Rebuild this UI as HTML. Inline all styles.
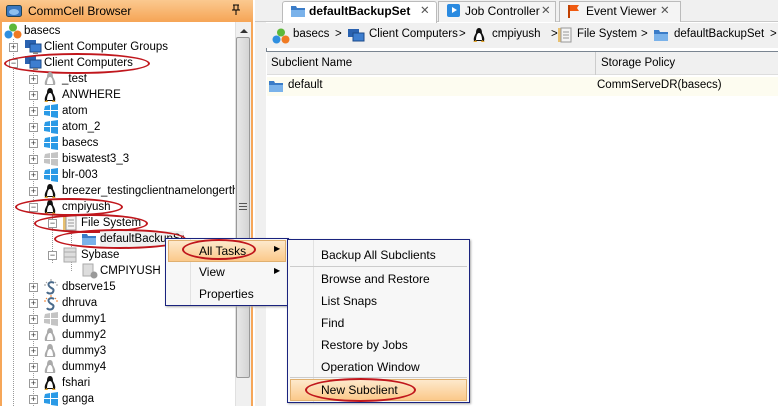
<!DOCTYPE html>
<html><head><meta charset="utf-8">
<style>
*{margin:0;padding:0;box-sizing:border-box}
body{width:778px;height:406px;overflow:hidden;background:#fff;font-family:"Liberation Sans",Tahoma,sans-serif;font-size:11.5px;color:#000;position:relative}
.a{position:absolute;white-space:nowrap}
.t{position:absolute;white-space:nowrap;line-height:16px;height:16px}
.ex{position:absolute;width:9px;height:9px;border:1px solid #999;background:#fff;font-size:9px;line-height:7px;text-align:center;color:#333}
.ov{position:absolute;border:2px solid #c0161c;border-radius:50%}
</style></head><body>
<!-- left panel -->
<div class="a" style="left:0;top:0;width:253px;height:406px;background:#f6a658"></div>
<div class="a" style="left:0;top:0;width:253px;height:21px;background:linear-gradient(#fbc98f,#f6a658)"></div>
<svg class="a" style="left:6px;top:4px" width="16" height="14"><rect x="0.5" y="1.5" width="15" height="11" rx="2" fill="#3a78c0" stroke="#245"/><ellipse cx="8" cy="8" rx="5" ry="3" fill="#8ec0ee"/></svg>
<div class="a" style="left:28px;top:4px;font-size:12px">CommCell Browser</div>
<svg class="a" style="left:231px;top:4px" width="10" height="12"><path d="M2 1h6M3 1v5h4V1M1 6h8M5 6v5" stroke="#000" fill="none"/></svg>
<div class="a" style="left:2px;top:22px;width:249px;height:384px;background:#fff"></div>
<div class="a" style="left:235px;top:22px;width:16px;height:384px;background:#f0f0f0;border-left:1px solid #e0e0e0"></div>
<div class="a" style="left:240px;top:29px;width:0;height:0;border-left:4px solid transparent;border-right:4px solid transparent;border-bottom:4px solid #333"></div>
<div class="a" style="left:236px;top:37px;width:14px;height:341px;background:linear-gradient(90deg,#e8e8e8,#d4d4d4);border:1px solid #999;border-radius:2px"></div>
<div class="a" style="left:239px;top:203px;width:8px;height:7px;border-top:1px solid #555;border-bottom:1px solid #555"></div>
<div class="a" style="left:239px;top:206px;width:8px;height:1px;background:#555"></div>
<div class="a" style="left:13px;top:39px;height:367px;border-left:1px dotted #999"></div>
<div class="a" style="left:33px;top:71px;height:335px;border-left:1px dotted #999"></div>
<div class="a" style="left:52px;top:215px;height:48px;border-left:1px dotted #999"></div>
<div class="a" style="left:71px;top:231px;height:40px;border-left:1px dotted #999"></div>

<svg class="a" style="left:4px;top:23px" width="18" height="16"><circle cx="9" cy="4.5" r="4" fill="#5db83a"/><circle cx="4.5" cy="11.5" r="4" fill="#2f8fe0"/><circle cx="13.5" cy="11.5" r="4" fill="#f07a22"/></svg>
<div class="t" style="left:24px;top:23px">basecs</div>
<div class="ex" style="left:9px;top:43px">+</div>
<svg class="a" style="left:24px;top:39px" width="18" height="15"><rect x="1" y="1" width="11" height="8" fill="#2a62b0"/><rect x="6" y="5" width="11" height="8" fill="#3d7ed0" stroke="#1b4a8a"/><rect x="9" y="13" width="5" height="2" fill="#888"/></svg>
<div class="t" style="left:44px;top:39px">Client Computer Groups</div>
<div class="ex" style="left:9px;top:59px">&#8722;</div>
<svg class="a" style="left:24px;top:55px" width="18" height="15"><rect x="1" y="1" width="11" height="8" fill="#2a62b0"/><rect x="6" y="5" width="11" height="8" fill="#3d7ed0" stroke="#1b4a8a"/><rect x="9" y="13" width="5" height="2" fill="#888"/></svg>
<div class="t" style="left:44px;top:55px">Client Computers</div>
<div class="ov" style="left:4px;top:53px;width:146px;height:21px"></div>

<svg width="0" height="0" style="position:absolute"><defs>
<symbol id="lx" viewBox="0 0 14 16"><path d="M7 1C4.5 1 4 4 4 6 3 8 1 11 2 14h10c1-3-1-6-2-8 0-2-.5-5-3-5z" fill="#111"/><path d="M7 6c-2 0-3 4-3 7h6c0-3-1-7-3-7z" fill="#fff"/><path d="M1 15l3-2 1 2zM13 15l-3-2-1 2z" fill="#e0a020"/></symbol>
<symbol id="lxg" viewBox="0 0 14 16"><path d="M7 1C4.5 1 4 4 4 6 3 8 1 11 2 14h10c1-3-1-6-2-8 0-2-.5-5-3-5z" fill="#aaa"/><path d="M7 6c-2 0-3 4-3 7h6c0-3-1-7-3-7z" fill="#fff"/></symbol>
<symbol id="wn" viewBox="0 0 16 14"><path d="M2 2l5-1v5H1zM8 1l7-1v6H8zM1 7h6v5l-6-1zM8 7h7v7l-7-1z" fill="#2a9ae6"/></symbol>
<symbol id="wng" viewBox="0 0 16 14"><path d="M2 2l5-1v5H1zM8 1l7-1v6H8zM1 7h6v5l-6-1zM8 7h7v7l-7-1z" fill="#c4c4c4"/></symbol>
<symbol id="sy" viewBox="0 0 16 16"><path d="M11 4c-3-2-7 0-5 3s6 2 4 6c-1 2-5 2-6 0" stroke="#4a6a8a" stroke-width="2" fill="none"/><path d="M3 3l1 1M8 0v2M13 3l-1 1M1 6h2M15 6h-2" stroke="#999"/></symbol>
<symbol id="syo" viewBox="0 0 16 16"><path d="M11 4c-3-2-7 0-5 3s6 2 4 6c-1 2-5 2-6 0" stroke="#4a6a8a" stroke-width="2" fill="none"/><path d="M3 3l1 1M8 0v2M13 3l-1 1M1 6h2M15 6h-2" stroke="#f07a22"/></symbol>
<symbol id="fd" viewBox="0 0 16 14"><path d="M1 2h5l1 2h8v9H1z" fill="#3a7cc8"/><path d="M1 6h14v7H1z" fill="#7ab2ea"/></symbol>
</defs></svg>

<div class="ex" style="left:29px;top:75px">+</div><svg class="a" style="left:43px;top:71px" width="14" height="16"><use href="#lxg"/></svg><div class="t" style="left:62px;top:71px">_test</div>
<div class="ex" style="left:29px;top:91px">+</div><svg class="a" style="left:43px;top:87px" width="14" height="16"><use href="#lx"/></svg><div class="t" style="left:62px;top:87px">ANWHERE</div>
<div class="ex" style="left:29px;top:107px">+</div><svg class="a" style="left:43px;top:104px" width="16" height="14"><use href="#wn"/></svg><div class="t" style="left:62px;top:103px">atom</div>
<div class="ex" style="left:29px;top:123px">+</div><svg class="a" style="left:43px;top:120px" width="16" height="14"><use href="#wn"/></svg><div class="t" style="left:62px;top:119px">atom_2</div>
<div class="ex" style="left:29px;top:139px">+</div><svg class="a" style="left:43px;top:136px" width="16" height="14"><use href="#wn"/></svg><div class="t" style="left:62px;top:135px">basecs</div>
<div class="ex" style="left:29px;top:155px">+</div><svg class="a" style="left:43px;top:152px" width="16" height="14"><use href="#wng"/></svg><div class="t" style="left:62px;top:151px">biswatest3_3</div>
<div class="ex" style="left:29px;top:171px">+</div><svg class="a" style="left:43px;top:168px" width="16" height="14"><use href="#wn"/></svg><div class="t" style="left:62px;top:167px">blr-003</div>
<div class="ex" style="left:29px;top:187px">+</div><svg class="a" style="left:43px;top:183px" width="14" height="16"><use href="#lx"/></svg><div class="t" style="left:62px;top:183px;width:173px;overflow:hidden">breezer_testingclientnamelongerthan</div>
<div class="ex" style="left:29px;top:203px">&#8722;</div><svg class="a" style="left:43px;top:199px" width="14" height="16"><use href="#lx"/></svg><div class="t" style="left:62px;top:199px">cmpiyush</div>
<div class="ov" style="left:15px;top:198px;width:108px;height:18px"></div>
<div class="ex" style="left:48px;top:219px">&#8722;</div>
<svg class="a" style="left:62px;top:215px" width="16" height="16"><rect x="1" y="1" width="4" height="14" fill="#e8c070"/><rect x="4" y="1" width="10" height="14" fill="#f4f4f4" stroke="#999"/><path d="M6 5h6M6 8h6M6 11h6" stroke="#999"/></svg>
<div class="t" style="left:81px;top:215px">File System</div>
<div class="ov" style="left:34px;top:214px;width:114px;height:19px"></div>
<svg class="a" style="left:81px;top:232px" width="16" height="14"><use href="#fd"/></svg>
<div class="t" style="left:100px;top:231px;width:84px;overflow:hidden;background:#f0f0f0">defaultBackupSet</div>
<div class="ov" style="left:54px;top:229px;width:132px;height:20px"></div>
<div class="ex" style="left:48px;top:251px">&#8722;</div>
<svg class="a" style="left:63px;top:247px" width="14" height="16"><rect x="1" y="1" width="12" height="14" fill="#ddd" stroke="#aaa"/><path d="M1 5h12M1 10h12" stroke="#aaa"/></svg>
<div class="t" style="left:81px;top:247px">Sybase</div>
<svg class="a" style="left:82px;top:263px" width="16" height="16"><rect x="1" y="1" width="10" height="12" fill="#ddd" stroke="#aaa"/><circle cx="12" cy="12" r="3.5" fill="#999"/></svg>
<div class="t" style="left:100px;top:263px">CMPIYUSH</div>
<div class="ex" style="left:29px;top:283px">+</div><svg class="a" style="left:43px;top:279px" width="16" height="16"><use href="#sy"/></svg><div class="t" style="left:62px;top:279px">dbserve15</div>
<div class="ex" style="left:29px;top:299px">+</div><svg class="a" style="left:43px;top:295px" width="16" height="16"><use href="#syo"/></svg><div class="t" style="left:62px;top:295px">dhruva</div>
<div class="ex" style="left:29px;top:315px">+</div><svg class="a" style="left:43px;top:312px" width="16" height="14"><use href="#wng"/></svg><div class="t" style="left:62px;top:311px">dummy1</div>
<div class="ex" style="left:29px;top:331px">+</div><svg class="a" style="left:43px;top:327px" width="14" height="16"><use href="#lxg"/></svg><div class="t" style="left:62px;top:327px">dummy2</div>
<div class="ex" style="left:29px;top:347px">+</div><svg class="a" style="left:43px;top:343px" width="14" height="16"><use href="#lxg"/></svg><div class="t" style="left:62px;top:343px">dummy3</div>
<div class="ex" style="left:29px;top:363px">+</div><svg class="a" style="left:43px;top:359px" width="14" height="16"><use href="#lxg"/></svg><div class="t" style="left:62px;top:359px">dummy4</div>
<div class="ex" style="left:29px;top:379px">+</div><svg class="a" style="left:43px;top:375px" width="14" height="16"><use href="#lx"/></svg><div class="t" style="left:62px;top:375px">fshari</div>
<div class="ex" style="left:29px;top:395px">+</div><svg class="a" style="left:43px;top:392px" width="16" height="14"><use href="#wn"/></svg><div class="t" style="left:62px;top:391px">ganga</div>

<!-- splitter -->
<div class="a" style="left:255px;top:0;width:11px;height:406px;background:#f0f0f0"></div>
<div class="a" style="left:266px;top:48px;width:1px;height:358px;background:#7a8591"></div>
<!-- right tabs -->
<div class="a" style="left:255px;top:0;width:523px;height:22px;background:#f0f0f0;border-bottom:1px solid #c8c8c8"></div>
<div class="a" style="left:282px;top:1px;width:155px;height:22px;background:#fff;border:1px solid #bbb;border-bottom:none;border-radius:3px 3px 0 0"></div>
<svg class="a" style="left:290px;top:4px" width="16" height="14"><use href="#fd"/></svg>
<div class="a" style="left:309px;top:4px;font-weight:bold;font-size:12px">defaultBackupSet</div>
<div class="a" style="left:420px;top:3px;color:#555">&#x2715;</div>
<div class="a" style="left:438px;top:1px;width:118px;height:21px;border:1px solid #bbb;border-bottom:none;background:#f4f4f4"></div>
<div class="a" style="left:447px;top:4px;width:13px;height:13px;background:#2a8ae0;border-radius:2px"></div>
<div class="a" style="left:452px;top:7px;width:0;height:0;border-top:3.5px solid transparent;border-bottom:3.5px solid transparent;border-left:5px solid #fff"></div>
<div class="a" style="left:465px;top:4px;font-size:12px">Job Controller</div>
<div class="a" style="left:541px;top:3px;color:#555">&#x2715;</div>
<div class="a" style="left:559px;top:1px;width:122px;height:21px;border:1px solid #bbb;border-bottom:none;background:#f4f4f4"></div>
<svg class="a" style="left:568px;top:4px" width="12" height="14"><path d="M1 1v13" stroke="#c04000" stroke-width="2"/><path d="M2 1h9l-2 3 2 3H2z" fill="#f05a10"/></svg>
<div class="a" style="left:586px;top:4px;font-size:12px">Event Viewer</div>
<div class="a" style="left:660px;top:3px;color:#555">&#x2715;</div>

<!-- breadcrumb -->
<div class="a" style="left:262px;top:23px;width:516px;height:25px;background:#f0f0f0;overflow:hidden">
<svg class="a" style="left:10px;top:5px" width="18" height="16"><circle cx="9" cy="4.5" r="4" fill="#5db83a"/><circle cx="4.5" cy="11.5" r="4" fill="#2f8fe0"/><circle cx="13.5" cy="11.5" r="4" fill="#f07a22"/></svg>
<div class="a" style="left:31px;top:5px">basecs</div><div class="a" style="left:73px;top:5px">&gt;</div>
<svg class="a" style="left:85px;top:5px" width="18" height="15"><rect x="1" y="1" width="11" height="8" fill="#2a62b0"/><rect x="6" y="5" width="11" height="8" fill="#3d7ed0" stroke="#1b4a8a"/></svg>
<div class="a" style="left:107px;top:5px">Client Computers</div><div class="a" style="left:197px;top:5px">&gt;</div>
<svg class="a" style="left:210px;top:4px" width="14" height="16"><use href="#lx"/></svg>
<div class="a" style="left:230px;top:5px">cmpiyush</div><div class="a" style="left:289px;top:5px">&gt;</div>
<svg class="a" style="left:295px;top:4px" width="16" height="16"><rect x="1" y="1" width="4" height="14" fill="#e8c070"/><rect x="4" y="1" width="10" height="14" fill="#f4f4f4" stroke="#999"/><path d="M6 5h6M6 8h6M6 11h6" stroke="#999"/></svg>
<div class="a" style="left:315px;top:5px">File System</div><div class="a" style="left:379px;top:5px">&gt;</div>
<svg class="a" style="left:391px;top:5px" width="16" height="14"><use href="#fd"/></svg>
<div class="a" style="left:412px;top:5px">defaultBackupSet</div><div class="a" style="left:508px;top:5px">&gt;</div>
</div>

<div class="a" style="left:266px;top:51px;width:512px;height:355px;border-top:1px solid #7a8591;background:#fff"></div>
<div class="a" style="left:267px;top:52px;width:511px;height:23px;background:#f0f0f0;border-bottom:1px solid #ddd"></div>
<div class="a" style="left:595px;top:52px;width:1px;height:23px;background:#ccc"></div>
<div class="a" style="left:271px;top:57px">Subclient Name</div>
<div class="a" style="left:601px;top:57px">Storage Policy</div>
<div class="a" style="left:267px;top:77px;width:511px;height:19px;background:#fdfcf0"></div>
<svg class="a" style="left:268px;top:79px" width="16" height="14"><use href="#fd"/></svg>
<div class="a" style="left:288px;top:79px">default</div>
<div class="a" style="left:597px;top:79px">CommServeDR(basecs)</div>

<!-- context menu 1 -->
<div class="a" style="left:165px;top:238px;width:124px;height:68px;background:#f7f7f7;border:1px solid #1a237e;box-shadow:1px 1px 2px #aaa">
 <div class="a" style="left:24px;top:0;width:1px;height:66px;background:#e2e2e2"></div>
 <div class="a" style="left:2px;top:1px;width:118px;height:22px;background:linear-gradient(#fde9cc,#fbc98a);border:1px solid #e0b070"></div>
 <div class="a" style="left:33px;top:5px;font-size:12px">All Tasks</div><div class="a" style="left:108px;top:5px;font-size:8px">&#9654;</div>
 <div class="a" style="left:33px;top:26px;font-size:12px">View</div><div class="a" style="left:108px;top:27px;font-size:8px">&#9654;</div>
 <div class="a" style="left:33px;top:48px;font-size:12px">Properties</div>
</div>
<div class="ov" style="left:182px;top:239px;width:74px;height:21px"></div>
<!-- submenu -->
<div class="a" style="left:287px;top:239px;width:183px;height:164px;background:#f7f7f7;border:1px solid #1a237e;box-shadow:1px 1px 2px #aaa;font-size:12px">
 <div class="a" style="left:25px;top:0;width:1px;height:162px;background:#e2e2e2"></div>
 <div class="a" style="left:33px;top:8px">Backup All Subclients</div>
 <div class="a" style="left:2px;top:26px;width:177px;height:1px;background:#ccc"></div>
 <div class="a" style="left:33px;top:32px">Browse and Restore</div>
 <div class="a" style="left:33px;top:54px">List Snaps</div>
 <div class="a" style="left:33px;top:76px">Find</div>
 <div class="a" style="left:33px;top:98px">Restore by Jobs</div>
 <div class="a" style="left:33px;top:120px">Operation Window</div>
 <div class="a" style="left:2px;top:137px;width:177px;height:1px;background:#ccc"></div>
 <div class="a" style="left:2px;top:139px;width:177px;height:22px;background:linear-gradient(#fde9cc,#fbc98a);border:1px solid #e0b070"></div>
 <div class="a" style="left:33px;top:143px">New Subclient</div>
</div>
<div class="ov" style="left:305px;top:378px;width:111px;height:24px"></div>
</body></html>
